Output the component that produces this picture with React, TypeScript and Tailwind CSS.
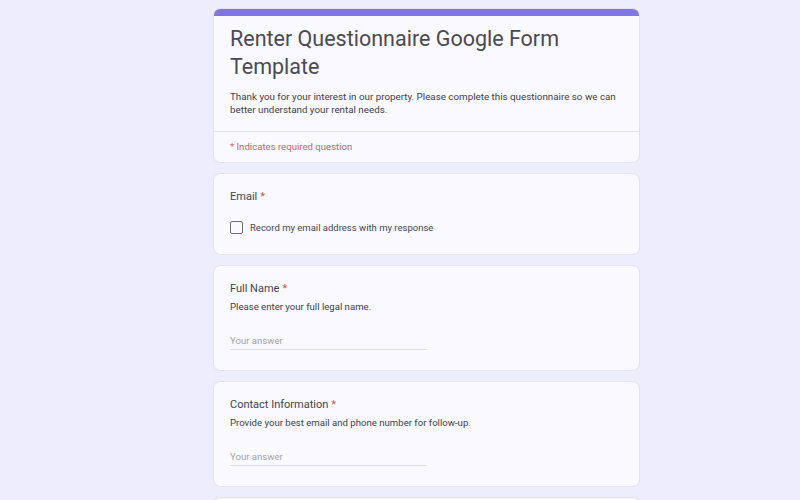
import React from "react";

const font = { fontFamily: "Roboto, 'Noto Sans', Arial, sans-serif" };

function Req() {
  return <span className="text-[#d4525c] ml-[3px]">*</span>;
}

function TextQuestion({ title, desc }: { title: string; desc: string }) {
  return (
    <div className="rounded-[7px] bg-[#f9f9fe] border border-[#e3e1f0] px-[16px] pt-[15px] pb-[20px]">
      <div className="text-[11px] leading-[16px] text-[#43434c]">
        {title}
        <Req />
      </div>
      <div className="text-[9.6px] leading-[14px] text-[#3f3f48] mt-[3px]">{desc}</div>
      <div className="mt-[20px] w-[197px] border-b border-[#dcdbe6] pb-[1px]">
        <div className="text-[9.6px] leading-[14px] text-[#a3a2ac]">Your answer</div>
      </div>
    </div>
  );
}

export default function App() {
  return (
    <div className="h-[500px] overflow-hidden bg-[#eeedfb] pt-[8px] pl-[213px]" style={font}>
      <div className="w-[427px] flex flex-col gap-[10px]">
        <div className="rounded-[7px] bg-[#f9f9fe] border border-[#e3e1f0] overflow-hidden">
          <div className="h-[7px] bg-[#8175df]" />
          <div className="px-[16px] pt-[9px] pb-[15px]">
            <div className="text-[21.5px] leading-[28px] text-[#4a4a54]">
              Renter Questionnaire Google Form Template
            </div>
            <div className="mt-[9px] text-[9.8px] leading-[13px] text-[#3f3f48]">
              Thank you for your interest in our property. Please complete this questionnaire so we can better understand your rental needs.
            </div>
          </div>
          <div className="border-t border-[#e2e1ea] px-[16px] pt-[8px] pb-[9px]">
            <div className="text-[9.6px] leading-[13px] text-[#c9646c]">* Indicates required question</div>
          </div>
        </div>

        <div className="rounded-[7px] bg-[#f9f9fe] border border-[#e3e1f0] px-[16px] pt-[15px] pb-[20px]">
          <div className="text-[11px] leading-[16px] text-[#43434c]">
            Email
            <Req />
          </div>
          <div className="mt-[16px] flex items-center gap-[7px]">
            <div className="w-[13px] h-[13px] rounded-[2px] border-[1.5px] border-[#6b6b73]" />
            <div className="text-[9.5px] leading-[13px] text-[#47474f]">Record my email address with my response</div>
          </div>
        </div>

        <TextQuestion title="Full Name" desc="Please enter your full legal name." />
        <TextQuestion title="Contact Information" desc="Provide your best email and phone number for follow-up." />
        <div className="h-[100px] rounded-[7px] bg-[#f9f9fe] border border-[#e3e1f0]" />
      </div>
    </div>
  );
}
